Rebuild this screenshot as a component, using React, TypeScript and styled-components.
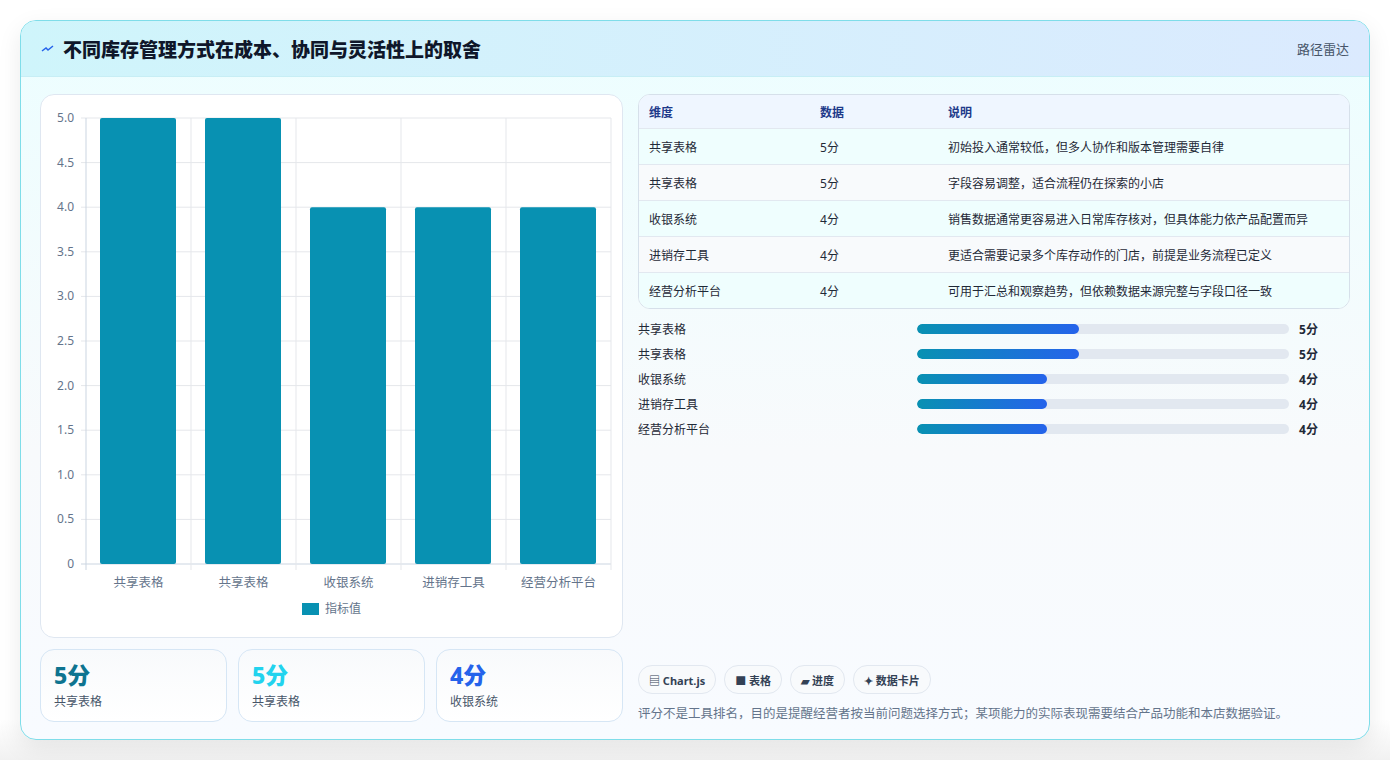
import React from "react";
import styled, { createGlobalStyle } from "styled-components";

const G = createGlobalStyle`
  html,body{margin:0;padding:0;background:#f3f4f6;}
  body{font-family:"Noto Sans","Noto Sans CJK SC",sans-serif;color:#0f172a;}
`;
const Page = styled.div`width:1390px;height:760px;box-sizing:border-box;padding:20px 20px;background:linear-gradient(#fff 0,#fff 720px,#f1f1f1 100%);`;
const Card = styled.div`height:720px;box-sizing:border-box;border:1px solid #7fdde9;border-radius:16px;overflow:hidden;background:linear-gradient(180deg,#ecfeff,#f8fafc 60%, #f8fbff);box-shadow:0 8px 24px rgba(0,0,0,.08);display:flex;flex-direction:column;`;
const Header = styled.div`height:55px;flex:none;display:flex;align-items:center;justify-content:space-between;padding:0 20px;background:linear-gradient(90deg,#cff5fb,#dbeafe);border-bottom:1px solid #c7eef5;`;
const Title = styled.h1`margin:0;font-size:19px;font-weight:800;display:flex;align-items:center;gap:8px;color:#0f172a;`;
const Tag = styled.span`font-size:13px;color:#475569;`;
const Body = styled.div`flex:1;display:grid;grid-template-columns:583px 1fr;gap:15px;padding:17px 19px 19px 19px;`;
const Col = styled.div`display:flex;flex-direction:column;gap:11px;min-height:0;`;
const ChartBox = styled.div`height:544px;box-sizing:border-box;background:#fff;border:1px solid #dfe7f1;border-radius:14px;`;
const Stats = styled.div`display:grid;grid-template-columns:repeat(3,1fr);gap:11px;`;
const Stat = styled.div`height:73px;box-sizing:border-box;border:1px solid #d6e6f5;border-radius:14px;background:linear-gradient(#f8fafc,#fff);padding:9px 13px;`;
const StatV = styled.div<{c:string}>`font-size:23px;font-weight:800;color:${p=>p.c};line-height:32px;`;
const StatL = styled.div`font-size:12px;color:#475569;margin-top:1px;`;
const Right = styled.div`display:flex;flex-direction:column;justify-content:space-between;`;
const Table = styled.div`border:1px solid #d6e0ea;border-radius:12px;overflow:hidden;background:#fff;`;
const Row = styled.div<{h?:boolean;alt?:boolean}>`display:grid;grid-template-columns:171px 128px 1fr;height:${p=>p.h?33:35}px;align-items:center;padding-left:10px;font-size:12px;background:${p=>p.h?"#eff6ff":p.alt?"#f8fafc":"#effefe"};color:${p=>p.h?"#1e3a8a":"#1f2937"};font-weight:${p=>p.h?600:400};border-top:${p=>p.h?"none":"1px solid #e2e8f0"};`;
const Bars = styled.div`display:flex;flex-direction:column;gap:7px;margin-top:11px;`;
const BarRow = styled.div`display:grid;grid-template-columns:269px 372px auto;gap:10px;align-items:center;font-size:12px;color:#1f2937;height:18px;`;
const Track = styled.div`height:10px;border-radius:5px;background:#e2e8f0;overflow:hidden;`;
const Fill = styled.div`height:100%;border-radius:5px;background:linear-gradient(90deg,#0891b2,#2563eb);`;
const Val = styled.span`font-weight:700;`;
const Chips = styled.div`display:flex;gap:8px;`;
const Chip = styled.span`height:27px;padding:0 10px;border:1px solid #e2e8f0;border-radius:14px;background:#f8fafc;font-size:11px;font-weight:700;color:#334155;display:flex;align-items:center;gap:3px;`;
const Note = styled.p`margin:9px 0 0;font-size:12.5px;color:#64748b;`;
const Top = styled.div``;
const Bottom = styled.div``;

const names=["共享表格","共享表格","收银系统","进销存工具","经营分析平台"];
const vals=[5,5,4,4,4];
const desc=["初始投入通常较低，但多人协作和版本管理需要自律","字段容易调整，适合流程仍在探索的小店","销售数据通常更容易进入日常库存核对，但具体能力依产品配置而异","更适合需要记录多个库存动作的门店，前提是业务流程已定义","可用于汇总和观察趋势，但依赖数据来源完整与字段口径一致"];

function Chart(){
  const x0=45,x1=570,yTop=23,yBot=469,w=(x1-x0)/5;
  const ticks=[0,0.5,1,1.5,2,2.5,3,3.5,4,4.5,5];
  return <svg width="582" height="542" style={{display:"block"}} fontFamily="Noto Sans, Noto Sans CJK SC, sans-serif">
    {ticks.map(t=>{const y=yBot-(yBot-yTop)*t/5;return <g key={t}>
      <line x1={x0-5} x2={x1} y1={y} y2={y} stroke={t===0?"#cbd5e1":"#e5e7eb"}/>
      <text x={x0-12} y={y+4} fontSize="12" fill="#64748b" textAnchor="end">{t===0?"0":t.toFixed(1)}</text></g>})}
    {[0,1,2,3,4,5].map(i=><line key={i} x1={x0+i*w} x2={x0+i*w} y1={yTop} y2={yBot+6} stroke={i===0?"#cbd5e1":"#e5e7eb"}/>)}
    {vals.map((v,i)=>{const h=(yBot-yTop)*v/5;return <rect key={i} x={x0+i*w+14} y={yBot-h} width={w-29} height={h} fill="#0891b2" rx="2"/>})}
    {names.map((n,i)=><text key={i} x={x0+i*w+w/2} y={yBot+23} fontSize="12.5" fill="#64748b" textAnchor="middle">{n}</text>)}
    <rect x="261" y="508" width="17" height="12" fill="#0891b2"/>
    <text x="284" y="518" fontSize="12" fill="#64748b">指标值</text>
  </svg>;
}

export default function App(){
  return <><G/><Page><Card>
    <Header><Title><svg width="14" height="10" viewBox="0 0 14 10"><path d="M1 7 L5 4 L7 6 L12 2" stroke="#2563eb" strokeWidth="1.5" fill="none"/></svg>不同库存管理方式在成本、协同与灵活性上的取舍</Title><Tag>路径雷达</Tag></Header>
    <Body>
      <Col>
        <ChartBox><Chart/></ChartBox>
        <Stats>
          <Stat><StatV c="#0e7490">5分</StatV><StatL>共享表格</StatL></Stat>
          <Stat><StatV c="#22d3ee">5分</StatV><StatL>共享表格</StatL></Stat>
          <Stat><StatV c="#2563eb">4分</StatV><StatL>收银系统</StatL></Stat>
        </Stats>
      </Col>
      <Right>
        <Top>
          <Table>
            <Row h><span>维度</span><span>数据</span><span>说明</span></Row>
            {names.map((n,i)=><Row key={i} alt={i%2===1}><span>{n}</span><span>{vals[i]}分</span><span>{desc[i]}</span></Row>)}
          </Table>
          <Bars>{names.map((n,i)=><BarRow key={i}><span>{n}</span><Track><Fill style={{width:vals[i]===5?"43.5%":"35%"}}/></Track><Val>{vals[i]}分</Val></BarRow>)}</Bars>
        </Top>
        <Bottom>
          <Chips><Chip>▤ Chart.js</Chip><Chip>■ 表格</Chip><Chip>▰ 进度</Chip><Chip>✦ 数据卡片</Chip></Chips>
          <Note>评分不是工具排名，目的是提醒经营者按当前问题选择方式；某项能力的实际表现需要结合产品功能和本店数据验证。</Note>
        </Bottom>
      </Right>
    </Body>
  </Card></Page></>;
}
